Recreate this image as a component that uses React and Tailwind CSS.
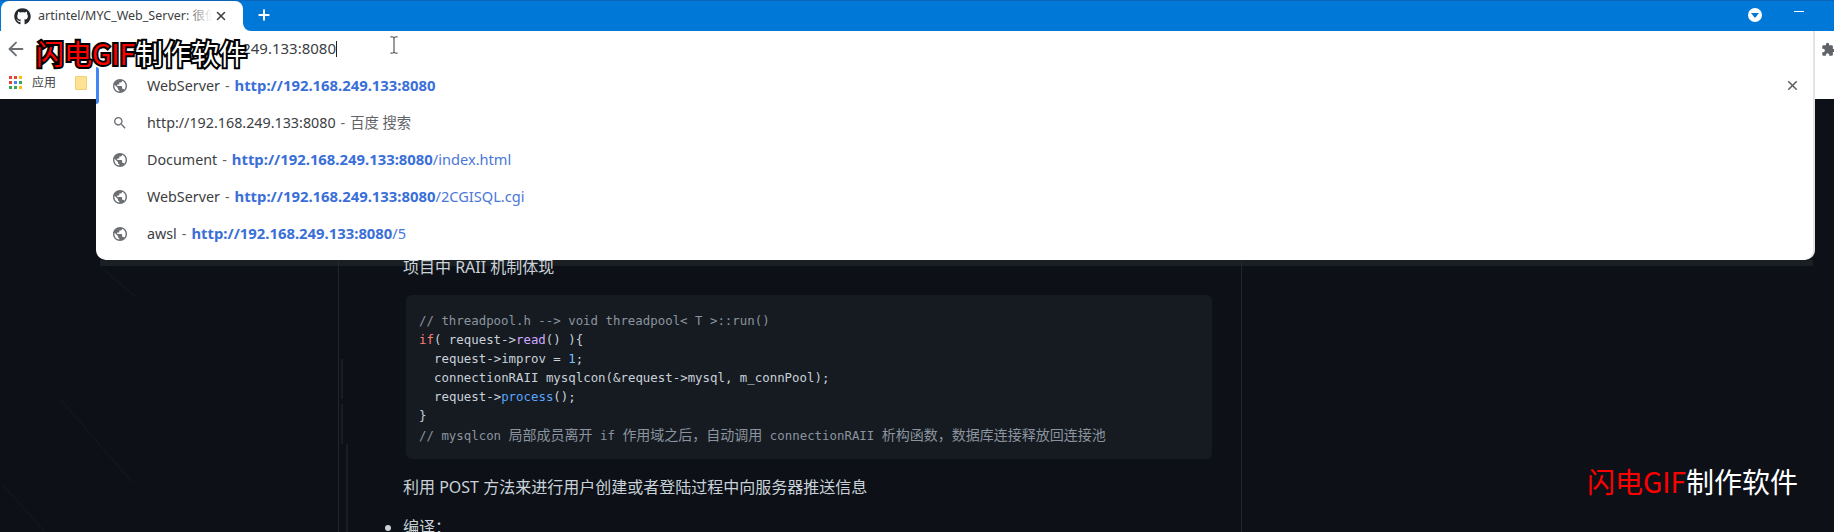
import React from "react";
import { FaGithub } from "react-icons/fa";
import { ArrowLeft, Plus, X } from "lucide-react";

const ui = "font-['Noto_Sans','Noto_Sans_CJK_SC',sans-serif]";
const cjk = "font-['Noto_Sans_CJK_SC',sans-serif] text-[14px]";

function Globe() {
  return (
    <svg viewBox="2 2 20 20" className="w-[14px] h-[14px] shrink-0 fill-[#6b6e72]">
      <path d="M12 2C6.48 2 2 6.48 2 12s4.48 10 10 10 10-4.48 10-10S17.52 2 12 2zm-1 17.93c-3.95-.49-7-3.85-7-7.93 0-.62.08-1.21.21-1.79L9 15v1c0 1.1.9 2 2 2v1.93zm6.9-2.54c-.26-.81-1-1.39-1.9-1.39h-1v-3c0-.55-.45-1-1-1H8v-2h2c.55 0 1-.45 1-1V7h2c1.1 0 2-.9 2-2v-.41c2.93 1.19 5 4.06 5 7.41 0 2.08-.8 3.97-2.1 5.39z" />
    </svg>
  );
}

function SearchGlyph() {
  return (
    <svg viewBox="3 3 18 18" className="w-[12px] h-[12px] shrink-0 fill-[#6b6e72]">
      <path d="M15.5 14h-.79l-.28-.27C15.41 12.59 16 11.11 16 9.5 16 5.91 13.09 3 9.5 3S3 5.91 3 9.5 5.91 16 9.5 16c1.61 0 3.09-.59 4.23-1.57l.27.28v.79l5 4.99L20.49 19l-4.99-5zm-6 0C7.01 14 5 11.99 5 9.5S7.01 5 9.5 5 14 7.01 14 9.5 11.99 14 9.5 14z" />
    </svg>
  );
}

function Row({ icon, title, sep = "-", bold, rest, active, gray }) {
  return (
    <div className="relative h-[37px] flex items-center pl-[17px] pr-[14px]">
      {active && <div className="absolute left-0 top-0 bottom-0 w-[3px] bg-[#4285f4] rounded-r-sm" />}
      <span className="w-[13px] flex justify-center">{icon === "search" ? <SearchGlyph /> : <Globe />}</span>
      <div className="ml-[21px] text-[14.3px] whitespace-nowrap text-[#3c4043] flex-1">
        <span>{title}</span>
        <span className="text-[#5f6368] mx-[5px]">{sep}</span>
        {gray && <span className="text-[#5f6368]">{gray}</span>}
        {bold && <span className="font-bold text-[14.85px] text-[#3a6fd8]">{bold}</span>}
        {rest && <span className="text-[14.6px] text-[#4a78d8]">{rest}</span>}
      </div>
      {active && <X size={15} strokeWidth={2.6} className="text-[#5f6368] mr-[-1px]" />}
    </div>
  );
}

function Watermark({ className, outlined }) {
  const stroke = outlined ? "[-webkit-text-stroke:4px_#000] [paint-order:stroke_fill]" : "";
  return (
    <div className={`absolute whitespace-nowrap text-[28px] leading-[36px] font-['Noto_Sans_CJK_SC',sans-serif] ${stroke} ${className}`}>
      <span className="text-[#ff0000]">闪电GIF</span>
      <span className="text-white">制作软件</span>
    </div>
  );
}

function CodeLine({ children, indent }) {
  return <div className={`h-[19px] whitespace-pre ${indent ? "pl-[15px]" : ""}`}>{children}</div>;
}

const Cm = ({ children }) => <span className="text-[#8b949e]">{children}</span>;

export default function App() {
  return (
    <div className={`relative h-[532px] w-[1834px] overflow-hidden bg-[#0d1117] ${ui}`}>
      {/* title bar */}
      <div className="relative h-[31px] bg-[#0078d7] border-t border-[#0a64b8] flex items-end">
        <div className="relative h-[30px] w-[242px] ml-[1px] bg-white rounded-t-lg flex items-center pl-[13px] pr-[9px]">
          <FaGithub size={17} className="text-[#24292e] shrink-0" />
          <div className="relative ml-[7px] w-[174px] overflow-hidden whitespace-nowrap text-[12.5px] text-[#3c4043]">
            artintel/MYC_Web_Server: 很值得学习的项目
            <div className="absolute right-0 top-0 bottom-0 w-[26px] bg-gradient-to-r from-transparent to-white" />
          </div>
          <X size={14} strokeWidth={2.6} className="text-[#3c4043] ml-[2px] shrink-0" />
          <div className="absolute left-full bottom-0 w-2 h-2 bg-white">
            <div className="w-full h-full bg-[#0078d7] rounded-bl-lg" />
          </div>
        </div>
        <div className="ml-[13px] mb-[8px]">
          <Plus size={16} strokeWidth={3} className="text-white" />
        </div>
        <div className="flex-1" />
        <div className="mb-[9px] w-[14px] h-[14px] rounded-full bg-white flex items-center justify-center">
          <div className="w-0 h-0 border-l-[4px] border-r-[4px] border-t-[5px] border-l-transparent border-r-transparent border-t-[#0078d7]" />
        </div>
        <div className="ml-[32px] mr-[30px] mb-[19px] w-[10px] h-px bg-white" />
      </div>

      {/* toolbar */}
      <div className="h-[36px] bg-white flex items-center pl-[5px]">
        <ArrowLeft size={22} strokeWidth={2} className="text-[#6b6e72]" />
        <div className="flex-1" />
        <svg viewBox="0 0 24 24" className="w-[15px] h-[15px] mr-[-2px] fill-[#5f6368]">
          <path d="M20.5 11H19V7a2 2 0 0 0-2-2h-4V3.5a2.5 2.5 0 0 0-5 0V5H4a2 2 0 0 0-2 2v3.8h1.5a2.7 2.7 0 0 1 0 5.4H2V20a2 2 0 0 0 2 2h3.8v-1.5a2.7 2.7 0 0 1 5.4 0V22H17a2 2 0 0 0 2-2v-4h1.5a2.5 2.5 0 0 0 0-5z" />
        </svg>
      </div>

      {/* bookmarks */}
      <div className="h-[32px] bg-white flex items-center pl-[9px]">
        <div className="grid grid-cols-3 gap-[2px] w-[13px] mb-[1px]">
          {["bg-[#ea4335]", "bg-[#ea4335]", "bg-[#fbbc04]", "bg-[#ea4335]", "bg-[#4285f4]", "bg-[#34a853]", "bg-[#34a853]", "bg-[#34a853]", "bg-[#fbbc04]"].map((c, i) => (
            <span key={i} className={`w-[3px] h-[3px] ${c}`} />
          ))}
        </div>
        <span className="ml-[10px] mb-[1px] text-[12px] text-[#3c4043]">应用</span>
        <div className="ml-[19px] w-[12px] h-[14px] rounded-[1px] bg-[#fde293] border border-[#f3cf6e]" />
      </div>

      {/* page */}
      <div className="relative h-[433px] overflow-hidden">
        <svg className="absolute inset-0 w-full h-full" viewBox="0 0 1834 433" fill="none" stroke="#151a20" strokeWidth="1">
          <path d="M61 301L132 383M3 386L45 433M104 171L135 197M1000 205L1040 230M1100 260L1150 285" />
          <path d="M130 301L338 338M80 345L338 380M1241 330L1600 390M420 60L560 70" strokeDasharray="1 7" />
          <path d="M342 260V300M342 305V345M347 345V433" stroke="#1e232a" strokeWidth="1.5" />
        </svg>
        <div className="absolute left-[100px] top-[161px] w-[1713px] h-[6px] bg-[#1a1f24]" />
        <div className="relative ml-[338px] w-[904px] h-full border-x border-[#21262d] pt-[156px] pl-[64px] text-[#c9d1d9] text-[16px] leading-[24px]">
          <p>项目中 RAII 机制体现</p>
          <div className="mt-[16px] ml-[3px] w-[806px] h-[164px] rounded-md bg-[#161b22] px-[13px] pt-[16px] font-['DejaVu_Sans_Mono',monospace] text-[12.4px] leading-[19px] text-[#c9d1d9]">
            <CodeLine><Cm>{"// threadpool.h --> void threadpool< T >::run()"}</Cm></CodeLine>
            <CodeLine><span className="text-[#ff7b72]">if</span>{"( request->"}<span className="text-[#d2a8ff]">read</span>{"() ){"}</CodeLine>
            <CodeLine indent>{"request->improv = "}<span className="text-[#79c0ff]">1</span>;</CodeLine>
            <CodeLine indent>{"connectionRAII mysqlcon(&request->mysql, m_connPool);"}</CodeLine>
            <CodeLine indent>{"request->"}<span className="text-[#58a6ff]">process</span>{"();"}</CodeLine>
            <CodeLine>{"}"}</CodeLine>
            <CodeLine>
              <Cm>
                {"// mysqlcon "}<span className={cjk}>局部成员离开</span>{" if "}<span className={cjk}>作用域之后，自动调用</span>{" connectionRAII "}<span className={cjk}>析构函数，数据库连接释放回连接池</span>
              </Cm>
            </CodeLine>
          </div>
          <p className="mt-[16px]">利用 POST 方法来进行用户创建或者登陆过程中向服务器推送信息</p>
          <ul className="mt-[16px] list-disc ml-[-1px] pl-[1px] marker:text-[#c9d1d9]">
            <li>编译：</li>
          </ul>
        </div>
      </div>

      {/* omnibox popup */}
      <div className="absolute left-[96px] top-[31px] w-[1717px] h-[229px] bg-white rounded-b-[10px] shadow-[2px_0_0_#e4e4e4]">
        <div className="relative h-[36px]">
          <div className="absolute right-[calc(100%-240px)] top-[6px] whitespace-nowrap text-[15px] leading-[22px] text-[#3c4043]">192.168.249.133:8080</div>
          <div className="absolute left-[240px] top-[10px] w-px h-[16px] bg-[#202124]" />
          <svg viewBox="0 0 10 20" className="absolute left-[293px] top-[5px] w-[10px] h-[18px] stroke-[#222] fill-none">
            <path d="M1 1h2.5c1 0 1.5.5 1.5 1.5v15c0 1-.5 1.5-1.5 1.5H1M9 1H6.5C5.5 1 5 1.5 5 2.5M9 19H6.5c-1 0-1.5-.5-1.5-1.5" />
          </svg>
        </div>
        <Row active title="WebServer" bold="http://192.168.249.133:8080" />
        <Row icon="search" title="http://192.168.249.133:8080" gray="百度 搜索" />
        <Row title="Document" bold="http://192.168.249.133:8080" rest="/index.html" />
        <Row title="WebServer" bold="http://192.168.249.133:8080" rest="/2CGISQL.cgi" />
        <Row title="awsl" bold="http://192.168.249.133:8080" rest="/5" />
      </div>

      <Watermark outlined className="left-[36px] top-[35px]" />
      <Watermark className="left-[1587px] top-[463px]" />
    </div>
  );
}
